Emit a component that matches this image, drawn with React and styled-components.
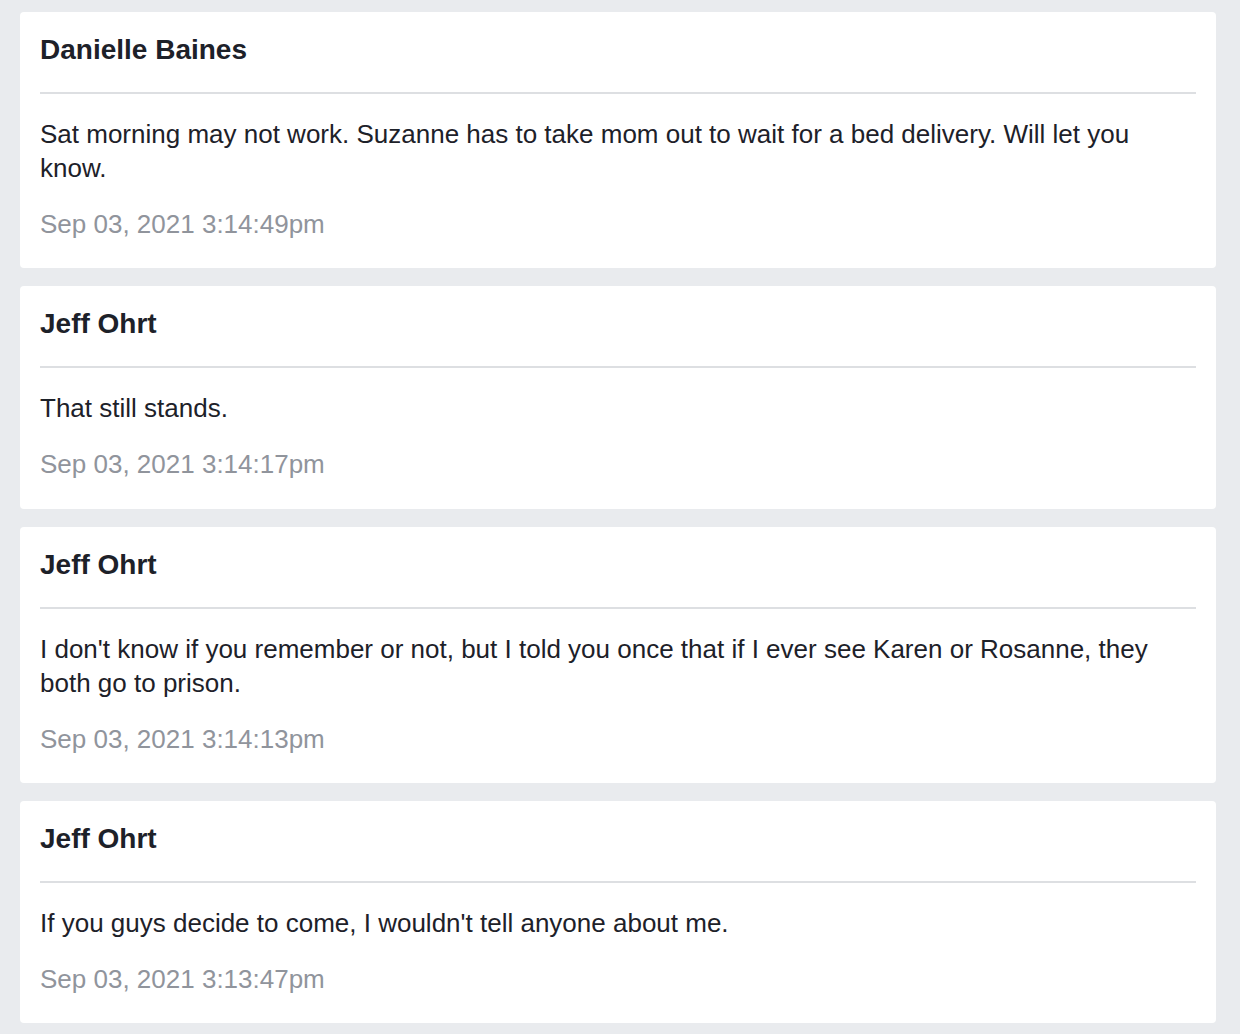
import React from "react";
import styled, { createGlobalStyle } from "styled-components";

const GlobalStyle = createGlobalStyle`
  html, body {
    margin: 0;
    padding: 0;
    background: #e9ebee;
  }
  body {
    font-family: "Liberation Sans", Arial, Helvetica, sans-serif;
    -webkit-font-smoothing: antialiased;
  }
`;

const Page = styled.div`
  display: flex;
  flex-direction: column;
  gap: 18px;
  padding: 12px 24px 11px 20px;
  width: 1196px;
`;

const Card = styled.section`
  background: #ffffff;
  border-radius: 4px;
  padding: 21px 20px 27.25px 20px;
  display: flex;
  flex-direction: column;
`;

const Name = styled.h2`
  margin: 0;
  font-size: 28px;
  line-height: 34px;
  font-weight: bold;
  color: #1d2129;
  padding-bottom: 25px;
  border-bottom: 2px solid #dddfe2;
`;

const Body = styled.p`
  margin: 23px 0 0 0;
  font-size: 26px;
  line-height: 34px;
  color: #1d2129;
`;

const Time = styled.div`
  margin-top: 22px;
  font-size: 26px;
  line-height: 34px;
  color: #90949c;
`;

const messages = [
  {
    name: "Danielle Baines",
    text: "Sat morning may not work. Suzanne has to take mom out to wait for a bed delivery. Will let you know.",
    time: "Sep 03, 2021 3:14:49pm",
  },
  { name: "Jeff Ohrt", text: "That still stands.", time: "Sep 03, 2021 3:14:17pm" },
  {
    name: "Jeff Ohrt",
    text: "I don't know if you remember or not, but I told you once that if I ever see Karen or Rosanne, they both go to prison.",
    time: "Sep 03, 2021 3:14:13pm",
  },
  {
    name: "Jeff Ohrt",
    text: "If you guys decide to come, I wouldn't tell anyone about me.",
    time: "Sep 03, 2021 3:13:47pm",
  },
];

export default function App() {
  return (
    <>
      <GlobalStyle />
      <Page>
        {messages.map((m, i) => (
          <Card key={i}>
            <Name>{m.name}</Name>
            <Body>{m.text}</Body>
            <Time>{m.time}</Time>
          </Card>
        ))}
      </Page>
    </>
  );
}
